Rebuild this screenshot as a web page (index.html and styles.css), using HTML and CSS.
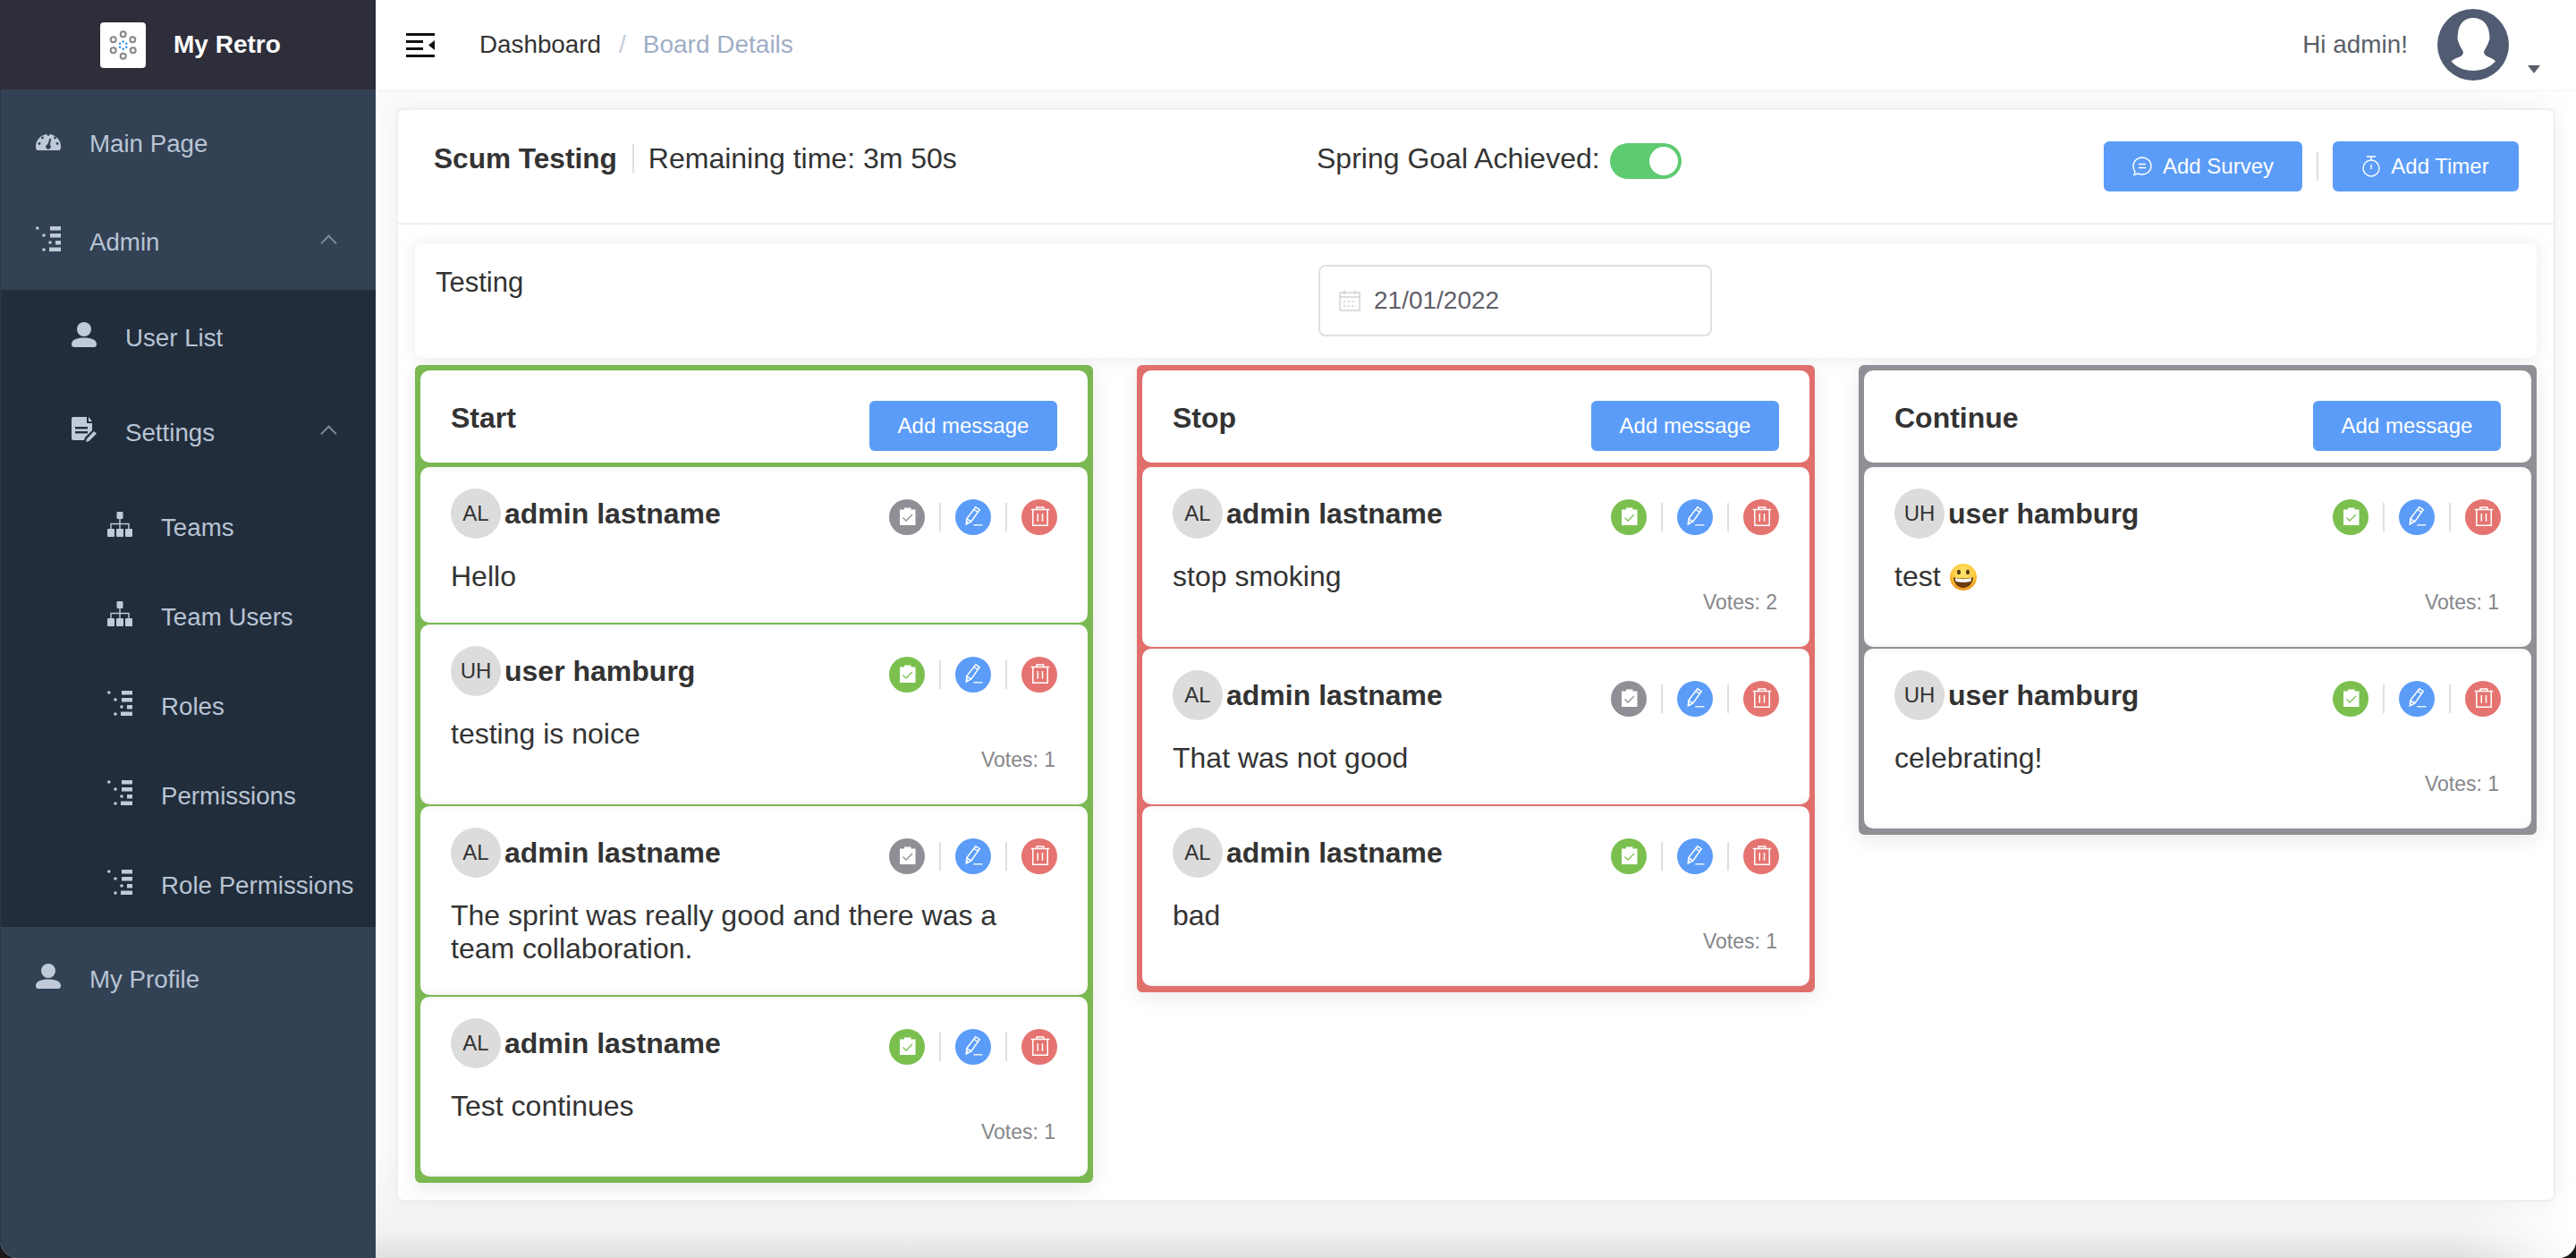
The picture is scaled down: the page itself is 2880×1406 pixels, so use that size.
FILE: index.html
```html
<!DOCTYPE html>
<html lang="en">
<head>
  <meta charset="UTF-8" />
  <meta name="viewport" content="width=device-width, initial-scale=1.0"/>
  <title>My Retro - Board Details</title>
  <link rel="stylesheet" href="styles.css">
</head>
<body>
  <!-- icon set -->
  <svg class="icon-defs" width="0" height="0">
    <symbol id="i-gauge" viewBox="0 0 28 22">
      <path fill="currentColor" d="M0 18A14 14 0 0 1 28 18C28 19.8 27.6 21 26.6 22H1.4C.4 21 0 19.8 0 18Z"/>
      <g fill="#334155">
        <circle cx="4" cy="14.500" r="1.400"/><circle cx="7.500" cy="8" r="1.400"/><circle cx="14" cy="4.500" r="1.400"/>
        <circle cx="21.500" cy="8" r="1.400"/><circle cx="24" cy="14.500" r="1.400"/><circle cx="14" cy="18" r="2.800"/>
        <path d="M12.800 17L15.600 8.500L17.200 9L15.400 18Z"/>
      </g>
    </symbol>
    <symbol id="i-list" viewBox="0 0 28 28">
      <g fill="currentColor">
        <rect x="16" y="0" width="12" height="4.500"/><rect x="16" y="8" width="12" height="4.500"/>
        <rect x="22" y="16" width="6" height="4.500"/><rect x="15" y="23.500" width="13" height="4.500"/>
        <circle cx="1.800" cy="2" r="1.800"/><circle cx="9" cy="10" r="1.800"/><circle cx="16" cy="18" r="1.800"/><circle cx="9" cy="26" r="1.800"/>
      </g>
    </symbol>
    <symbol id="i-user" viewBox="0 0 28 28">
      <g fill="currentColor">
        <circle cx="14" cy="8" r="8"/>
        <path d="M0 24.5C0 20 6 17.5 14 17.5S28 20 28 24.5C28 27 27 28 25 28H3C1 28 0 27 0 24.5Z"/>
      </g>
    </symbol>
    <symbol id="i-file" viewBox="0 0 28 28">
      <path fill="currentColor" d="M2 0H17V7H23V15L15 23L14 26H2C.8 26 0 25.2 0 24V2C0 .8 .8 0 2 0Z"/>
      <path fill="currentColor" d="M19 0L23 5H19Z"/>
      <g fill="#222d3b"><rect x="4" y="11" width="14" height="2.4"/><rect x="4" y="16" width="14" height="2.4"/></g>
      <path fill="currentColor" d="M25 16L28 18.6L19.500 27L16 28L17 24.500Z"/>
    </symbol>
    <symbol id="i-sitemap" viewBox="0 0 28 28">
      <g fill="currentColor">
        <rect x="10.500" y="0" width="7" height="8" rx="1"/>
        <rect x="0" y="19" width="8" height="9" rx="1"/><rect x="10" y="19" width="8" height="9" rx="1"/><rect x="20" y="19" width="8" height="9" rx="1"/>
      </g>
      <path fill="none" stroke="currentColor" stroke-width="1.400" d="M14 8V19M4 19V13.500H24V19"/>
    </symbol>
    <symbol id="i-clip" viewBox="0 0 40 40">
      <path fill="#fff" d="M12 11.500H17V9.500H24.500V11.500H29.500V29H12Z"/>
      <path fill="none" stroke="currentColor" stroke-width="1.300" d="M15.500 20.500L19 24L26 17"/>
    </symbol>
    <symbol id="i-pen" viewBox="0 0 40 40">
      <path fill="none" stroke="#fff" stroke-width="1.500" d="M12.300 28L12.800 21.800L22.800 8.800L27.200 11.600L17.800 25ZM12.800 21.800L17.800 25M21 11.500L25.300 14.400M14 27.200L12.800 24.500"/>
      <path stroke="#fff" stroke-width="1.300" d="M20.300 28.800H30.400"/>
    </symbol>
    <symbol id="i-trash" viewBox="0 0 40 40">
      <path fill="none" stroke="#fff" stroke-width="1.500" d="M10.700 11.500H31.300M17 11.500V9H24.700V11.500M12.800 11.500V29.200H29.200V11.500M18.300 16V24.800M23.500 16V24.800"/>
    </symbol>
  </svg>

  <div class="app">
    <aside class="sidebar">
      <div class="brand">
        <span class="brand-logo">
          <svg viewBox="0 0 51 51" width="51" height="51">
            <g fill="none" stroke="#858585" stroke-width="2">
              <circle cx="25.700" cy="13.300" r="3"/><circle cx="36.300" cy="19.300" r="3"/><circle cx="36.700" cy="31.300" r="3"/>
              <circle cx="25.700" cy="37.700" r="3"/><circle cx="14.700" cy="31.300" r="3"/><circle cx="14.700" cy="19.300" r="3"/>
            </g>
            <g fill="#2f86f5">
              <circle cx="25.700" cy="21.500" r="1.200"/><circle cx="29.300" cy="23.700" r="1.200"/><circle cx="29.300" cy="27.700" r="1.200"/>
              <circle cx="25.700" cy="29.800" r="1.200"/><circle cx="22.100" cy="27.700" r="1.200"/><circle cx="22.100" cy="23.700" r="1.200"/>
            </g>
          </svg>
        </span>
        <span class="brand-name">My Retro</span>
      </div>

      <nav class="menu">
        <a class="nav-item"><svg class="nav-icon gauge"><use href="#i-gauge"/></svg><span>Main Page</span></a>
        <a class="nav-item"><svg class="nav-icon"><use href="#i-list"/></svg><span>Admin</span><i class="chevron"></i></a>
        <div class="submenu">
          <a class="nav-item sub"><svg class="nav-icon"><use href="#i-user"/></svg><span>User List</span></a>
          <a class="nav-item sub"><svg class="nav-icon"><use href="#i-file"/></svg><span>Settings</span><i class="chevron"></i></a>
          <a class="nav-item subsub"><svg class="nav-icon"><use href="#i-sitemap"/></svg><span>Teams</span></a>
          <a class="nav-item subsub"><svg class="nav-icon"><use href="#i-sitemap"/></svg><span>Team Users</span></a>
          <a class="nav-item subsub"><svg class="nav-icon"><use href="#i-list"/></svg><span>Roles</span></a>
          <a class="nav-item subsub"><svg class="nav-icon"><use href="#i-list"/></svg><span>Permissions</span></a>
          <a class="nav-item subsub"><svg class="nav-icon"><use href="#i-list"/></svg><span>Role Permissions</span></a>
        </div>
        <a class="nav-item last"><svg class="nav-icon"><use href="#i-user"/></svg><span>My Profile</span></a>
      </nav>
    </aside>

    <div class="main">
      <header class="topbar">
        <svg class="burger" viewBox="0 0 32 27" width="32" height="27">
          <path d="M0 0H32V3H0ZM0 8H19V11H0ZM0 16H19V19H0ZM0 24H32V27H0ZM32 8V19L25 13.500Z"/>
        </svg>
        <div class="breadcrumb">
          <span>Dashboard</span><span class="crumb-sep">/</span><span class="crumb-current">Board Details</span>
        </div>
        <div class="user-box">
          <span class="hello">Hi admin!</span>
          <svg class="user-avatar" viewBox="0 0 80 80" width="80" height="80">
            <circle cx="40" cy="40" r="40" fill="#515c72"/>
            <path fill="#fff" d="M40 10C51 10 57.500 18 58 28C58.200 31 59 33 58 35C56 41 53 45 52 48C52 51 55 53 58 54C61 55 63.500 57 65 58.500C59 65 50 69 40 69C30 69 21 65 15.500 58.500C18 56 21 55 24 54C27 53 29 51 29 48C27 44 24 40 23 35C22 33 22.800 31 23 28C23.500 18 29 10 40 10Z"/>
          </svg>
          <i class="caret"></i>
        </div>
      </header>

      <section class="card">
        <div class="card-head">
          <div class="board-title">
            <strong>Scum Testing</strong><span class="title-sep"></span><span>Remaining time: 3m 50s</span>
          </div>
          <div class="goal">
            <span>Spring Goal Achieved:</span>
            <span class="toggle"><span class="toggle-knob"></span></span>
          </div>
          <div class="head-actions">
            <button class="btn btn-survey">
              <svg viewBox="0 0 22 22" width="22" height="22" fill="none" stroke="#fff" stroke-width="1.400">
                <path d="M11 1C16.500 1 21 5 21 10.500S16.500 20 11 20C9.300 20 7.700 19.700 6.300 19L2 20.500L3 16.500C1.700 14.900 1 12.800 1 10.500C1 5 5.500 1 11 1Z"/>
                <path d="M7 8.500H15M7 12.500H15"/>
              </svg>
              Add Survey
            </button>
            <span class="btn-sep"></span>
            <button class="btn btn-timer">
              <svg viewBox="0 0 20 24" width="20" height="24" fill="none" stroke="#fff" stroke-width="1.400">
                <circle cx="10" cy="14" r="9"/>
                <path d="M5 1H15M10 1V5M10 10V15"/>
              </svg>
              Add Timer
            </button>
          </div>
        </div>

        <div class="card-body">
          <div class="board-desc">
            <div class="desc-text">Testing</div>
            <div class="date-input">
              <svg viewBox="0 0 24 24" width="24" height="24" fill="none" stroke="#cfd0d6" stroke-width="1.400">
                <rect x="1" y="3" width="22" height="20"/>
                <path d="M1 8H23M6 .5V5M18 .5V5"/>
                <path stroke-dasharray="2.500 2" d="M5 13H19M5 18H19"/>
              </svg>
              <span>21/01/2022</span>
            </div>
          </div>

          <div class="columns">
            <div class="column col-green">
              <div class="col-head"><h3>Start</h3><button class="btn">Add message</button></div>

              <div class="msg">
                <div class="msg-head">
                  <div class="author"><span class="initials">AL</span><strong>admin lastname</strong></div>
                  <div class="actions">
                    <span class="action a-grey"><svg><use href="#i-clip"/></svg></span><span class="action-sep"></span>
                    <span class="action a-blue"><svg><use href="#i-pen"/></svg></span><span class="action-sep"></span>
                    <span class="action a-red"><svg><use href="#i-trash"/></svg></span>
                  </div>
                </div>
                <p class="msg-text">Hello</p>
              </div>

              <div class="msg">
                <div class="msg-head">
                  <div class="author"><span class="initials">UH</span><strong>user hamburg</strong></div>
                  <div class="actions">
                    <span class="action a-green"><svg><use href="#i-clip"/></svg></span><span class="action-sep"></span>
                    <span class="action a-blue"><svg><use href="#i-pen"/></svg></span><span class="action-sep"></span>
                    <span class="action a-red"><svg><use href="#i-trash"/></svg></span>
                  </div>
                </div>
                <p class="msg-text">testing is noice</p>
                <div class="votes">Votes: 1</div>
              </div>

              <div class="msg">
                <div class="msg-head">
                  <div class="author"><span class="initials">AL</span><strong>admin lastname</strong></div>
                  <div class="actions">
                    <span class="action a-grey"><svg><use href="#i-clip"/></svg></span><span class="action-sep"></span>
                    <span class="action a-blue"><svg><use href="#i-pen"/></svg></span><span class="action-sep"></span>
                    <span class="action a-red"><svg><use href="#i-trash"/></svg></span>
                  </div>
                </div>
                <p class="msg-text">The sprint was really good and there was a team collaboration.</p>
              </div>

              <div class="msg">
                <div class="msg-head">
                  <div class="author"><span class="initials">AL</span><strong>admin lastname</strong></div>
                  <div class="actions">
                    <span class="action a-green"><svg><use href="#i-clip"/></svg></span><span class="action-sep"></span>
                    <span class="action a-blue"><svg><use href="#i-pen"/></svg></span><span class="action-sep"></span>
                    <span class="action a-red"><svg><use href="#i-trash"/></svg></span>
                  </div>
                </div>
                <p class="msg-text">Test continues</p>
                <div class="votes">Votes: 1</div>
              </div>
            </div>

            <div class="column col-red">
              <div class="col-head"><h3>Stop</h3><button class="btn">Add message</button></div>

              <div class="msg">
                <div class="msg-head">
                  <div class="author"><span class="initials">AL</span><strong>admin lastname</strong></div>
                  <div class="actions">
                    <span class="action a-green"><svg><use href="#i-clip"/></svg></span><span class="action-sep"></span>
                    <span class="action a-blue"><svg><use href="#i-pen"/></svg></span><span class="action-sep"></span>
                    <span class="action a-red"><svg><use href="#i-trash"/></svg></span>
                  </div>
                </div>
                <p class="msg-text">stop smoking</p>
                <div class="votes">Votes: 2</div>
              </div>

              <div class="msg">
                <div class="msg-head">
                  <div class="author"><span class="initials">AL</span><strong>admin lastname</strong></div>
                  <div class="actions">
                    <span class="action a-grey"><svg><use href="#i-clip"/></svg></span><span class="action-sep"></span>
                    <span class="action a-blue"><svg><use href="#i-pen"/></svg></span><span class="action-sep"></span>
                    <span class="action a-red"><svg><use href="#i-trash"/></svg></span>
                  </div>
                </div>
                <p class="msg-text">That was not good</p>
              </div>

              <div class="msg">
                <div class="msg-head">
                  <div class="author"><span class="initials">AL</span><strong>admin lastname</strong></div>
                  <div class="actions">
                    <span class="action a-green"><svg><use href="#i-clip"/></svg></span><span class="action-sep"></span>
                    <span class="action a-blue"><svg><use href="#i-pen"/></svg></span><span class="action-sep"></span>
                    <span class="action a-red"><svg><use href="#i-trash"/></svg></span>
                  </div>
                </div>
                <p class="msg-text">bad</p>
                <div class="votes">Votes: 1</div>
              </div>
            </div>

            <div class="column col-grey">
              <div class="col-head"><h3>Continue</h3><button class="btn">Add message</button></div>

              <div class="msg">
                <div class="msg-head">
                  <div class="author"><span class="initials">UH</span><strong>user hamburg</strong></div>
                  <div class="actions">
                    <span class="action a-green"><svg><use href="#i-clip"/></svg></span><span class="action-sep"></span>
                    <span class="action a-blue"><svg><use href="#i-pen"/></svg></span><span class="action-sep"></span>
                    <span class="action a-red"><svg><use href="#i-trash"/></svg></span>
                  </div>
                </div>
                <p class="msg-text">test
                  <svg class="emoji" viewBox="0 0 30 30" width="30" height="30" role="img" aria-label="grinning face">
                    <defs>
                      <radialGradient id="emoji-face" cx="50%" cy="35%" r="65%">
                        <stop offset="0" stop-color="#ffe873"/><stop offset=".65" stop-color="#fbc93c"/><stop offset="1" stop-color="#ee8f1c"/>
                      </radialGradient>
                    </defs>
                    <circle cx="15" cy="15" r="15" fill="url(#emoji-face)"/>
                    <ellipse cx="10" cy="9.500" rx="2" ry="2.800" fill="#5a3a12"/>
                    <ellipse cx="20" cy="9.500" rx="2" ry="2.800" fill="#5a3a12"/>
                    <path d="M4 15C8 17 22 17 26 15C26 22 21 27 15 27S4 22 4 15Z" fill="#6b3a10"/>
                    <path d="M6 16C10 17.500 20 17.500 24 16C24 18 23.500 19.500 23 20C19 21 11 21 7 20C6.500 19.500 6 18 6 16Z" fill="#fff"/>
                  </svg>
                </p>
                <div class="votes">Votes: 1</div>
              </div>

              <div class="msg">
                <div class="msg-head">
                  <div class="author"><span class="initials">UH</span><strong>user hamburg</strong></div>
                  <div class="actions">
                    <span class="action a-green"><svg><use href="#i-clip"/></svg></span><span class="action-sep"></span>
                    <span class="action a-blue"><svg><use href="#i-pen"/></svg></span><span class="action-sep"></span>
                    <span class="action a-red"><svg><use href="#i-trash"/></svg></span>
                  </div>
                </div>
                <p class="msg-text">celebrating!</p>
                <div class="votes">Votes: 1</div>
              </div>
            </div>
          </div>
        </div>
      </section>
    </div>
  </div>
</body>
</html>
```

FILE: styles.css
```css
* {
  box-sizing: border-box;
}

html, body {
  margin: 0;
  height: 100%;
  overflow: hidden;
}

body {
  font-family: "Liberation Sans", Arial, sans-serif;
  background-color: #1c181b;
  color: #333;
}

.icon-defs {
  position: absolute;
}

.app {
  display: flex;
  height: 1406px;
  border-radius: 0 0 20px 20px;
  overflow: hidden;
  background-color: #fff;
}

/* sidebar */
.sidebar {
  flex: 0 0 420px;
  background-color: #334155;
  border-left: 1px solid #2b3648;
}

.brand {
  display: flex;
  align-items: center;
  height: 100px;
  margin-left: -1px;
  padding-left: 112px;
  background-color: #2d2e3a;
}

.brand-logo {
  display: block;
  width: 51px;
  height: 51px;
  background-color: #fff;
  border-radius: 4px;
}

.brand-name {
  margin-left: 31px;
  font-size: 28px;
  font-weight: bold;
  color: #fff;
}

.menu {
  padding-top: 4px;
}

.nav-item {
  display: flex;
  align-items: center;
  height: 110px;
  padding: 4px 0 0 39px;
  font-size: 27.7px;
  color: #b8c4d4;
}

.nav-icon {
  flex: none;
  width: 28px;
  height: 28px;
  margin: -8px 32px 0 0;
  color: #c0cad8;
}

.nav-icon.gauge {
  height: 22px;
}

.chevron {
  width: 13px;
  height: 13px;
  margin: 0 46px 0 auto;
  border-top: 2px solid #7e8896;
  border-left: 2px solid #7e8896;
  transform: rotate(45deg);
}

.submenu {
  background-color: #222d3b;
}

.nav-item.sub {
  height: 106px;
  padding: 2px 0 0 79px;
}

.nav-item.subsub {
  height: 100px;
  padding: 8px 0 0 119px;
}

.nav-item.last {
  padding-top: 8px;
}

/* top bar */
.main {
  flex: 1;
  min-width: 0;
  background:
    linear-gradient(to left, #fff, rgba(255, 255, 255, 0) 130px),
    linear-gradient(to top, #dfdfdf, #f1f1f2 28px, #f6f6f7 64px, #fbfbfc 120px);
}

.topbar {
  display: flex;
  align-items: center;
  height: 100px;
  padding-left: 34px;
  background-color: #fff;
  box-shadow: 0 1px 4px rgba(0, 0, 0, 0.05);
}

.burger {
  flex: none;
  fill: #111;
}

.breadcrumb {
  margin-left: 50px;
  font-size: 27.800px;
  color: #333;
}

.crumb-sep {
  margin: 0 19px 0 20px;
  color: #c5cdd9;
}

.crumb-current {
  font-size: 28px;
  color: #a0aec6;
}

.user-box {
  display: flex;
  align-items: center;
  margin-left: auto;
  padding-right: 40px;
}

.hello {
  font-size: 27.900px;
  color: #5a5f69;
}

.user-avatar {
  margin-left: 33px;
}

.caret {
  align-self: flex-end;
  width: 0;
  height: 0;
  margin: 0 0 8px 21px;
  border-style: solid;
  border-width: 9px 7px 0;
  border-color: #5a5f69 transparent transparent;
}

/* board card */
.card {
  height: 1222px;
  margin: 21px 23px 0;
  background-color: #fff;
  border: 2px solid #eeeef4;
  border-radius: 8px;
  box-shadow: 0 0 24px rgba(0, 0, 0, 0.05);
}

.card-head {
  display: flex;
  align-items: flex-start;
  height: 128px;
  padding: 34px 39px 0 40px;
  border-bottom: 2px solid #eeeef4;
}

.board-title {
  display: flex;
  align-items: center;
  flex: 0 0 987px;
  font-size: 32px;
  line-height: 40px;
  color: #333;
}

.board-title strong {
  font-size: 31.600px;
}

.title-sep {
  width: 2px;
  height: 32px;
  margin: 0 16px 0 17px;
  background-color: #dedee4;
}

.goal {
  display: flex;
  align-items: flex-start;
  font-size: 32px;
  line-height: 40px;
  color: #333;
}

.toggle {
  display: flex;
  justify-content: flex-end;
  align-items: center;
  width: 80px;
  height: 40px;
  margin: 3px 0 0 11px;
  padding-right: 4px;
  background-color: #5ecb71;
  border-radius: 20px;
}

.toggle-knob {
  width: 32px;
  height: 32px;
  background-color: #fff;
  border-radius: 50%;
}

.head-actions {
  display: flex;
  align-items: center;
  margin-left: auto;
  padding-top: 1px;
}

.btn {
  display: inline-flex;
  align-items: center;
  justify-content: center;
  gap: 12px;
  height: 56px;
  padding: 0 32px;
  background-color: #5b9cf8;
  border: none;
  border-radius: 6px;
  font-family: inherit;
  font-size: 24px;
  color: #fff;
}

.btn-survey {
  width: 222px;
  padding: 0;
}

.btn-timer {
  width: 208px;
  padding: 0;
}

.btn-sep {
  width: 2px;
  height: 32px;
  margin: 0 16px;
  background-color: #dedee4;
}

.card-body {
  padding: 21px 19px 0;
}

.board-desc {
  display: grid;
  grid-template-columns: 1010px 440px;
  height: 128px;
  padding-top: 24px;
  background-color: #fff;
  border-radius: 8px;
  box-shadow: 0 0 20px rgba(0, 0, 0, 0.09);
}

.desc-text {
  padding-left: 23px;
  font-size: 31px;
  line-height: 40px;
}

.date-input {
  display: flex;
  align-items: center;
  gap: 15px;
  height: 80px;
  padding-left: 21px;
  border: 2px solid #e0e0e6;
  border-radius: 8px;
  font-size: 28px;
  color: #5f6068;
}

/* retro columns */
.columns {
  display: grid;
  grid-template-columns: repeat(3, 758px);
  gap: 49px;
  align-items: start;
  margin-top: 8px;
}

.column {
  display: flex;
  flex-direction: column;
  gap: 2px;
  padding-bottom: 1px;
  border: 6px solid;
  border-radius: 6px;
  box-shadow: 0 6px 22px rgba(0, 0, 0, 0.09);
}

.col-green { border-color: #7ab851; background-color: #7ab851; }
.col-red { border-color: #e06f6c; background-color: #e06f6c; }
.col-grey { border-color: #8f9095; background-color: #8f9095; }

.col-head {
  display: flex;
  align-items: flex-start;
  justify-content: space-between;
  height: 103px;
  margin-bottom: 3px;
  padding: 33px 34px 0;
  background-color: #fff;
  border-radius: 10px;
}

.col-head h3 {
  margin: 0;
  font-size: 32px;
  line-height: 40px;
}

.col-head .btn {
  margin-top: 1px;
  width: 210px;
  padding: 0;
}

.msg {
  padding: 24px 34px 33px;
  background-color: #fff;
  border-radius: 10px;
  box-shadow: inset 0 -6px 8px -6px rgba(0, 0, 0, 0.08), inset 0 6px 8px -6px rgba(0, 0, 0, 0.06);
}

.msg-head {
  display: flex;
  align-items: flex-start;
  justify-content: space-between;
}

.author {
  display: flex;
  align-items: center;
  gap: 4px;
  font-size: 32px;
}

.author strong {
  padding-top: 1px;
}

.initials {
  display: flex;
  align-items: center;
  justify-content: center;
  width: 56px;
  height: 56px;
  background-color: #dcdcdc;
  border-radius: 50%;
  font-size: 24px;
}

.actions {
  display: flex;
  align-items: center;
  margin-top: 12px;
}

.action {
  width: 40px;
  height: 40px;
  border-radius: 50%;
}

.action svg {
  display: block;
  width: 40px;
  height: 40px;
}

.action-sep {
  width: 2px;
  height: 32px;
  margin: 0 16px;
  background-color: #dedee4;
}

.a-grey { background-color: #8f9095; color: #8f9095; }
.a-green { background-color: #7bc04f; color: #7bc04f; }
.a-blue { background-color: #5b9cf8; color: #5b9cf8; }
.a-red { background-color: #e57470; color: #e57470; }

.msg-text {
  margin: 24px 0 0;
  font-size: 32px;
  line-height: 37px;
}

.emoji {
  margin-left: 2px;
  vertical-align: -5px;
}

.votes {
  margin: -3px 2px 4px 0;
  font-size: 23px;
  line-height: 26px;
  text-align: right;
  color: #85868a;
}
```
